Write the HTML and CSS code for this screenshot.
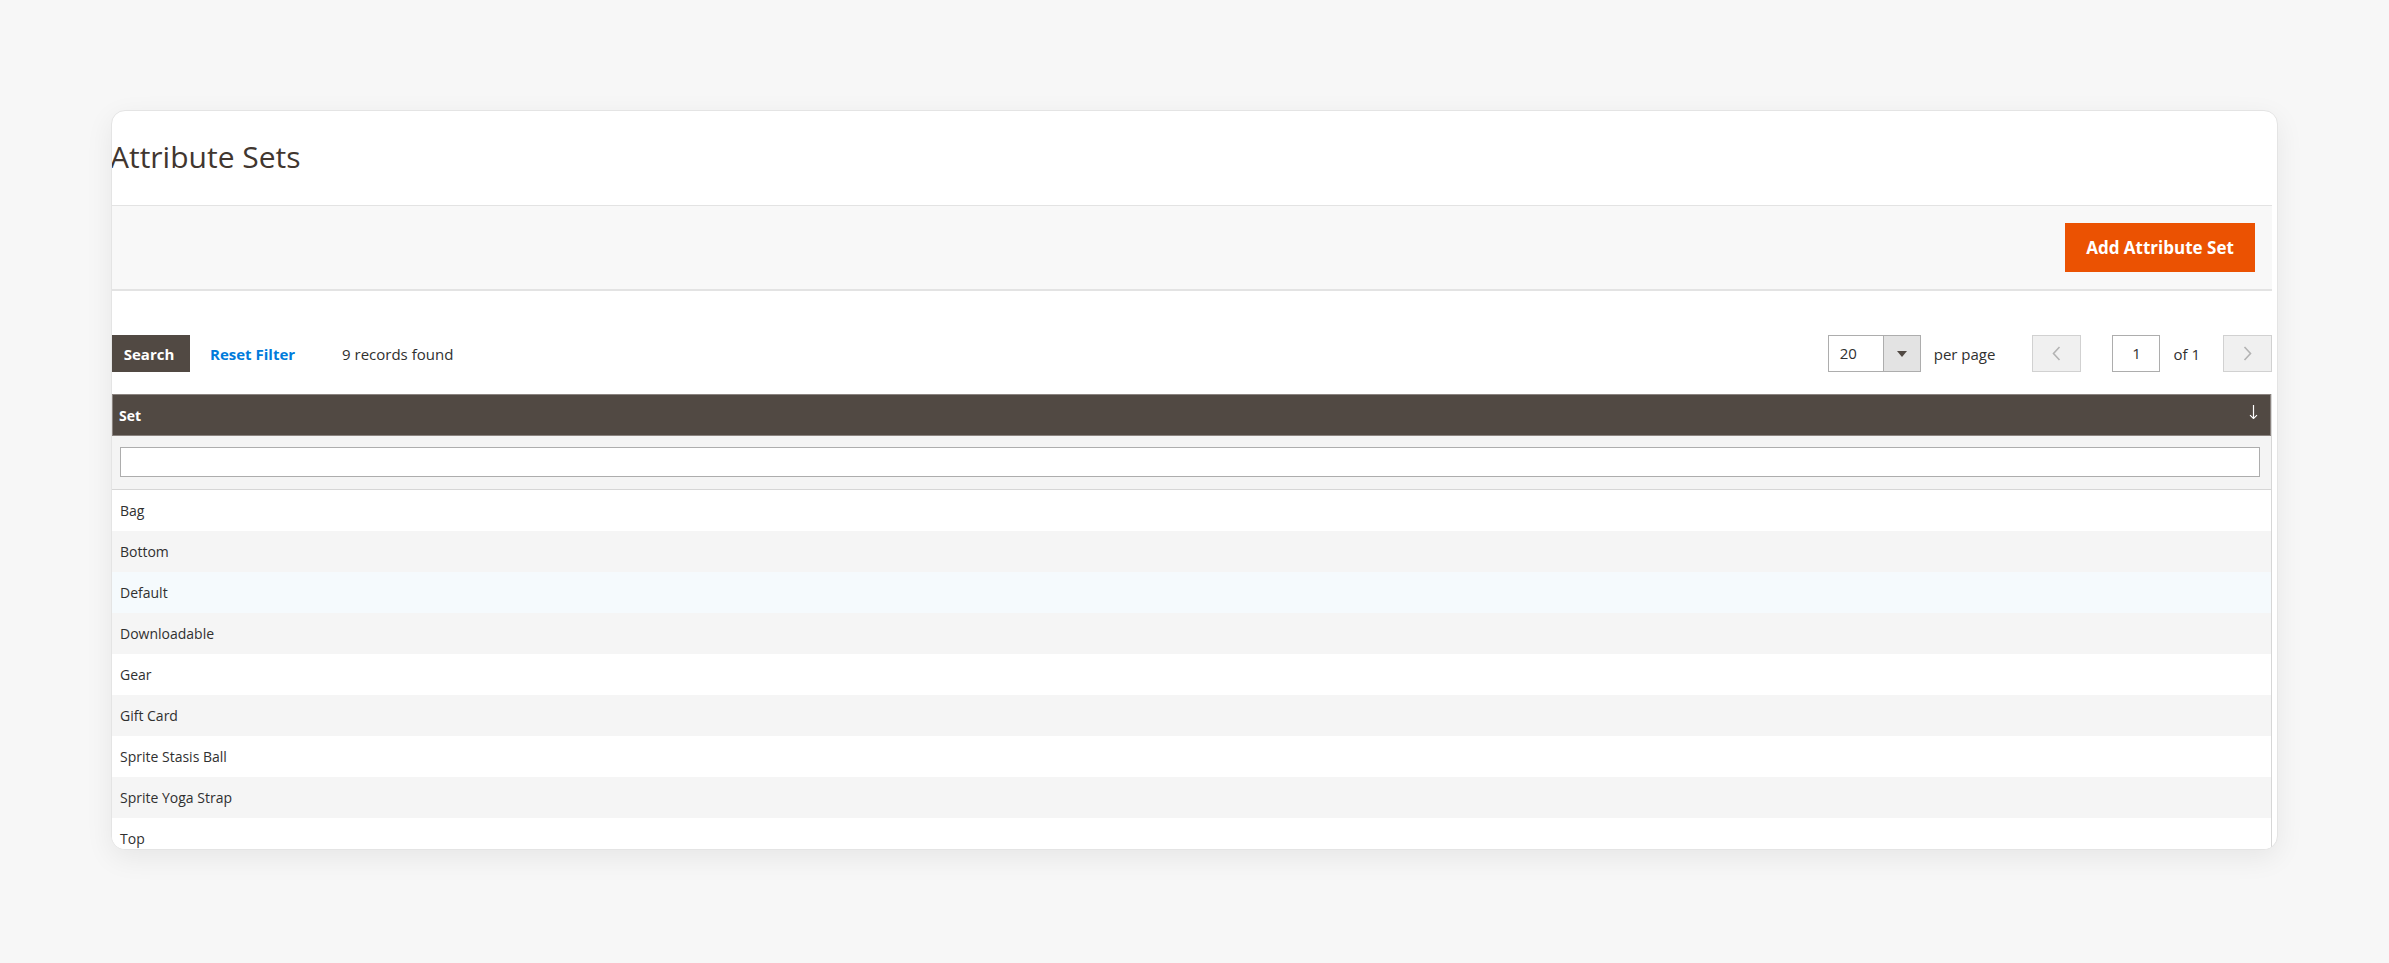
FILE: index.html
```html
<!DOCTYPE html>
<html lang="en">
<head>
<meta charset="utf-8">
<title>Attribute Sets</title>
<link rel="stylesheet" href="styles.css">
</head>
<body>
<div class="card">
  <div class="content">
    <div class="page-title-wrap">
      <h1 class="page-title">Attribute Sets</h1>
    </div>
    <div class="page-actions">
      <button class="btn-primary" type="button">Add Attribute Set</button>
    </div>
    <div class="grid-controls">
      <div class="controls-left">
        <button class="btn-search" type="button">Search</button>
        <a class="reset-link">Reset Filter</a>
        <span class="records">9 records found</span>
      </div>
      <div class="controls-right">
        <div class="limiter">
          <span class="limiter-value">20</span>
          <span class="limiter-toggle"><svg width="10" height="6" viewBox="0 0 10 6"><path d="M0 0h10L5 6z" fill="#514943"/></svg></span>
        </div>
        <span class="per-page">per page</span>
        <span class="pager-btn prev"><svg width="9" height="15" viewBox="0 0 9 15"><path d="M7.5 1 1.5 7.5l6 6.5" fill="none" stroke="#b3b3b3" stroke-width="1.6"/></svg></span>
        <span class="page-input">1</span>
        <span class="of-total">of 1</span>
        <span class="pager-btn next"><svg width="9" height="15" viewBox="0 0 9 15"><path d="M1.5 1l6 6.5-6 6.5" fill="none" stroke="#b3b3b3" stroke-width="1.6"/></svg></span>
      </div>
    </div>
    <div class="grid">
      <div class="grid-head">
        <span class="head-label">Set</span>
        <svg class="sort-arrow" width="9" height="14" viewBox="0 0 9 14"><path d="M4.5 0v13.5" stroke="#ffffff" stroke-width="1.2"/><path d="M1 10.2 4.5 13.5 8 10.2" fill="none" stroke="#ffffff" stroke-width="1.1"/></svg>
      </div>
      <div class="grid-filter">
        <div class="filter-input"></div>
      </div>
      <div class="grid-row">Bag</div>
      <div class="grid-row alt">Bottom</div>
      <div class="grid-row hover">Default</div>
      <div class="grid-row alt">Downloadable</div>
      <div class="grid-row">Gear</div>
      <div class="grid-row alt">Gift Card</div>
      <div class="grid-row">Sprite Stasis Ball</div>
      <div class="grid-row alt">Sprite Yoga Strap</div>
      <div class="grid-row">Top</div>
    </div>
  </div>
</div>
</body>
</html>
```

FILE: styles.css
```css
html, body {
  margin: 0;
  padding: 0;
}
body {
  background: #f7f7f7;
  font-family: "Open Sans", "Liberation Sans", sans-serif;
  color: #303030;
  padding-top: 110px;
  height: 853px;
  overflow: hidden;
}
.card {
  margin-left: 111px;
  width: 2165px;
  height: 738px;
  background: #ffffff;
  border: 1px solid #e4e4e4;
  border-radius: 14px;
  overflow: hidden;
  box-shadow: 0 8px 28px rgba(0, 0, 0, 0.07);
}
.content {
  width: 2160px;
}
.page-title-wrap {
  border-bottom: 1px solid #e3e3e3;
  padding-top: 28px;
  box-sizing: border-box;
  height: 95px;
}
.page-title {
  margin: 0 0 0 -2px;
  font-size: 30px;
  line-height: 36px;
  font-weight: 400;
  color: #41362f;
}
.page-actions {
  background: #f8f8f8;
  border-bottom: 2px solid #e3e3e3;
  padding: 17px 17px;
  display: flex;
  justify-content: flex-end;
}
.btn-primary {
  background: #eb5202;
  border: none;
  color: #ffffff;
  font-family: "Open Sans", "Liberation Sans", sans-serif;
  font-weight: 700;
  font-size: 17px;
  width: 190px;
  height: 49px;
  padding: 0;
}
.grid-controls {
  margin-top: 44px;
  display: flex;
  justify-content: space-between;
  align-items: center;
  height: 37px;
}
.controls-left {
  display: flex;
  align-items: center;
  font-size: 15px;
}
.btn-search {
  background: #514943;
  border: none;
  color: #ffffff;
  font-family: "Open Sans", "Liberation Sans", sans-serif;
  font-weight: 700;
  font-size: 15px;
  width: 78px;
  height: 37px;
  padding: 0 4px 0 0;
}
.reset-link {
  margin-left: 20px;
  color: #007bdb;
  font-weight: 700;
}
.records {
  margin-left: 47px;
  color: #303030;
}
.controls-right {
  display: flex;
  align-items: center;
  font-size: 15px;
}
.limiter {
  display: flex;
  width: 93px;
  height: 37px;
  box-sizing: border-box;
  border: 1px solid #adadad;
}
.limiter-value {
  width: 55px;
  border-right: 1px solid #adadad;
  padding-left: 11px;
  box-sizing: border-box;
  line-height: 35px;
}
.limiter-toggle {
  flex: 1;
  background: #e3e3e3;
  display: flex;
  align-items: center;
  justify-content: center;
}
.per-page {
  margin-left: 13px;
}
.pager-btn {
  width: 49px;
  height: 37px;
  box-sizing: border-box;
  background: #f0f0f0;
  border: 1px solid #d1d1d1;
  display: flex;
  align-items: center;
  justify-content: center;
}
.prev {
  margin-left: 37px;
}
.page-input {
  margin-left: 31px;
  width: 48px;
  height: 37px;
  box-sizing: border-box;
  border: 1px solid #adadad;
  text-align: center;
  line-height: 35px;
}
.of-total {
  margin-left: 13px;
}
.next {
  margin-left: 23px;
}
.grid {
  margin-top: 22px;
  border-right: 1px solid #d6d6d6;
}
.grid-head {
  height: 42px;
  box-sizing: border-box;
  background: #514943;
  border: 1px solid #8a837f;
  display: flex;
  align-items: center;
  justify-content: space-between;
  padding: 0 12px 0 6px;
  color: #ffffff;
  font-weight: 700;
  font-size: 14px;
}
.sort-arrow {
  margin-top: -6px;
}
.grid-filter {
  height: 54px;
  box-sizing: border-box;
  background: #f4f4f4;
  border-bottom: 1px solid #d6d6d6;
  padding: 11px 11px 0 8px;
}
.filter-input {
  height: 30px;
  box-sizing: border-box;
  background: #ffffff;
  border: 1px solid #adadad;
}
.grid-row {
  height: 41px;
  line-height: 41px;
  padding-left: 8px;
  font-size: 14px;
  color: #303030;
  background: #ffffff;
}
.grid-row.alt {
  background: #f5f5f5;
}
.grid-row.hover {
  background: #f5fafd;
}
```
